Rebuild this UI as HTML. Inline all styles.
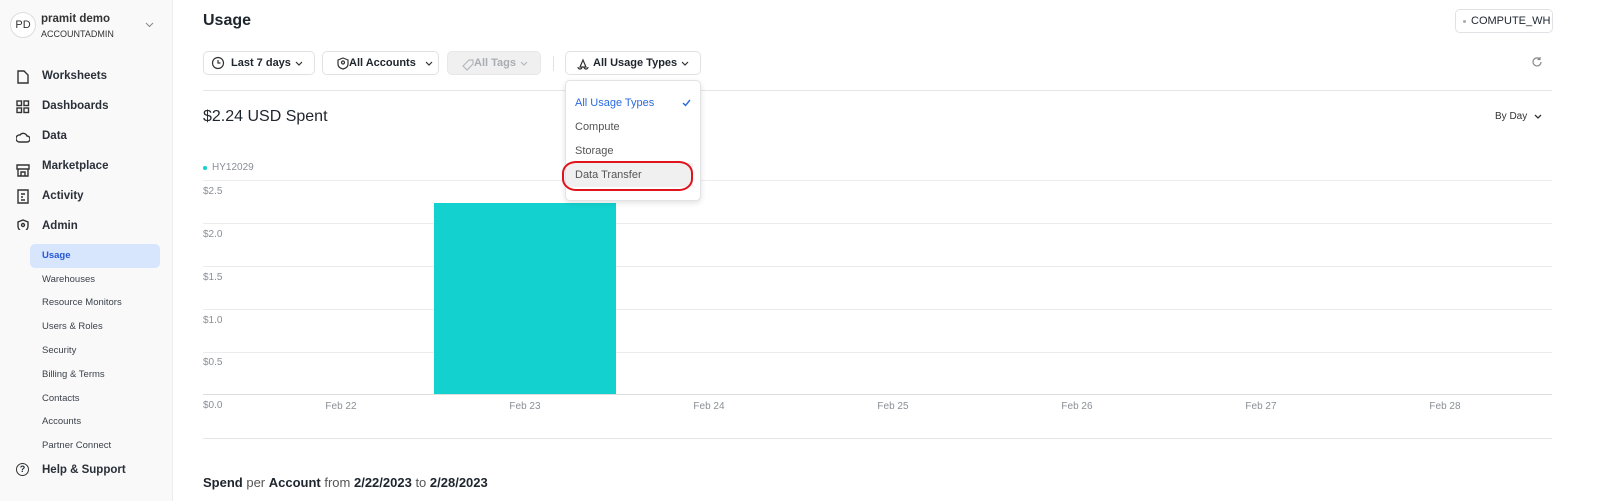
<!DOCTYPE html>
<html><head><style>
*{box-sizing:border-box;margin:0;padding:0}
body{width:1600px;height:501px;overflow:hidden;font-family:"Liberation Sans",sans-serif;background:#fff;position:relative;color:#1e252d}
.sb{position:absolute;left:0;top:0;width:173px;height:501px;background:#f9f9fa;border-right:1px solid #ececee}
.abs{position:absolute;white-space:nowrap}
.nav{font-size:11.5px;font-weight:bold;color:#2a3038}
.sub{font-size:9.5px;color:#3b424b;left:42px}
.btn{position:absolute;top:51px;height:24px;border:1px solid #dfe1e4;border-radius:5px;font-size:11px;font-weight:bold;color:#1e252d;padding:5px 0 0 0;background:#fff}
.yl{position:absolute;left:203px;font-size:10px;color:#8a8f96}
.gl{position:absolute;left:203px;width:1349px;height:1px;background:#ececee}
.xl{position:absolute;top:401px;font-size:10px;color:#8a8f96;width:60px;text-align:center}
</style></head><body>
<div class="sb">
<div class="abs" style="left:10px;top:12px;width:26px;height:26px;border:1px solid #dcdde0;border-radius:50%;background:#fff;font-size:11px;text-align:center;line-height:24px;color:#333">PD</div>
<div class="abs" style="left:41px;top:13px;font-size:11.5px;font-weight:bold;color:#333">pramit demo</div>
<div class="abs" style="left:41px;top:29px;font-size:9px;color:#333">ACCOUNTADMIN</div>
<svg class="abs" style="left:145px;top:22px" width="9" height="6"><path d="M1 1l3.5 3.5L8 1" stroke="#888" fill="none"/></svg>
<svg class="abs" style="left:16px;top:70px" width="14" height="160" fill="none" stroke="#333" stroke-width="1.4">
<path d="M2 1h6l4 4v8H2z"/>
<rect x="1" y="31" width="4.5" height="4.5"/><rect x="8" y="31" width="4.5" height="4.5"/><rect x="1" y="38" width="4.5" height="4.5"/><rect x="8" y="38" width="4.5" height="4.5"/>
<path d="M3 72h8a3 3 0 0 0 0-6 4 4 0 0 0-7-1 3 3 0 0 0-1 7z"/>
<path d="M1 95h12v4H1zM2 99v7h10v-7M5 106v-4h4v4"/>
<path d="M2 120h10v13H2zM5 124h4M5 127h2M5 130h4"/>
<path d="M7 150l5 2v4c0 3-2 5-5 6-3-1-5-3-5-6v-4z"/><circle cx="7" cy="155" r="1.5"/>
</svg>
<div class="abs nav" style="left:42px;top:70px">Worksheets</div>
<div class="abs nav" style="left:42px;top:100px">Dashboards</div>
<div class="abs nav" style="left:42px;top:130px">Data</div>
<div class="abs nav" style="left:42px;top:160px">Marketplace</div>
<div class="abs nav" style="left:42px;top:190px">Activity</div>
<div class="abs nav" style="left:42px;top:220px">Admin</div>
<div class="abs" style="left:30px;top:244px;width:130px;height:24px;background:#d7e5fd;border-radius:5px"></div>
<div class="abs sub" style="top:250px;color:#2458d6;font-weight:bold">Usage</div>
<div class="abs sub" style="top:274px">Warehouses</div>
<div class="abs sub" style="top:297px">Resource Monitors</div>
<div class="abs sub" style="top:321px">Users &amp; Roles</div>
<div class="abs sub" style="top:345px">Security</div>
<div class="abs sub" style="top:369px">Billing &amp; Terms</div>
<div class="abs sub" style="top:393px">Contacts</div>
<div class="abs sub" style="top:416px">Accounts</div>
<div class="abs sub" style="top:440px">Partner Connect</div>
<div class="abs" style="left:16px;top:463px;width:13px;height:13px;border:1.4px solid #333;border-radius:50%;font-size:9px;text-align:center;line-height:11px;font-weight:bold">?</div>
<div class="abs nav" style="left:42px;top:464px">Help &amp; Support</div>
</div>

<div class="abs" style="left:203px;top:12px;font-size:16px;font-weight:bold">Usage</div>
<div class="abs" style="left:1455px;top:9px;width:98px;height:24px;border:1px solid #dfe1e4;border-radius:5px;font-size:11px;padding:5px 0 0 15px;color:#1e252d">COMPUTE_WH</div>
<div class="abs" style="left:1463px;top:20px;width:3px;height:3px;border-radius:50%;background:#aaa"></div>

<div class="btn" style="left:203px;width:112px;padding-left:27px">Last 7 days</div>
<div class="btn" style="left:322px;width:117px;padding-left:26px">All Accounts</div>
<div class="btn" style="left:447px;width:94px;padding-left:26px;background:#f0f0f1;color:#a9adb2;border-color:#e6e7e9">All Tags</div>
<div class="abs" style="left:553px;top:56px;width:1px;height:15px;background:#dfe1e4"></div>
<div class="btn" style="left:565px;width:136px;padding-left:27px">All Usage Types</div>
<svg class="abs" style="left:210px;top:55px" width="500" height="16" fill="none" stroke="#333" stroke-width="1.2">
<circle cx="8" cy="8" r="5.5"/><path d="M8 5v3h2.5"/><path d="M86 7l3 3 3-3"/>
<path d="M133 3l5 2v4c0 3-2 4-5 5-3-1-5-2-5-5V5z"/><circle cx="133" cy="7.5" r="1.5"/><path d="M216 7l3 3 3-3"/>
<path d="M253 11l6-6h4v4l-6 6z" stroke="#b5b8bd"/><path d="M311 7l3 3 3-3" stroke="#b5b8bd"/>
<path d="M370 12l3-7 3 7zM368 12a2 2 0 1 0 4 0M374 12a2 2 0 1 0 4 0"/><path d="M472 7l3 3 3-3"/>
</svg>
<svg class="abs" style="left:1531px;top:56px" width="12" height="12" fill="none" stroke="#888" stroke-width="1.2"><path d="M10 6a4 4 0 1 1-1.5-3.2M9 1v2.5H6.5"/></svg>
<div class="abs" style="left:203px;top:90px;width:1349px;height:1px;background:#e4e5e7"></div>

<div class="abs" style="left:203px;top:108px;font-size:16px;">$2.24 USD Spent</div>
<div class="abs" style="left:1495px;top:111px;font-size:10px;color:#333">By Day</div>
<svg class="abs" style="left:1534px;top:114px" width="8" height="6"><path d="M1 1l3 3 3-3" stroke="#333" fill="none" stroke-width="1.3"/></svg>

<div class="abs" style="left:203px;top:166px;width:4px;height:4px;border-radius:50%;background:#13d1cf"></div>
<div class="abs" style="left:212px;top:162px;font-size:10px;color:#8a8f96">HY12029</div>
<div class="gl" style="top:180px"></div><div class="gl" style="top:223px"></div><div class="gl" style="top:266px"></div><div class="gl" style="top:309px"></div><div class="gl" style="top:352px"></div><div class="gl" style="top:394px;background:#dcdde0"></div>
<div class="yl" style="top:186px">$2.5</div><div class="yl" style="top:229px">$2.0</div><div class="yl" style="top:272px">$1.5</div><div class="yl" style="top:315px">$1.0</div><div class="yl" style="top:357px">$0.5</div><div class="yl" style="top:400px">$0.0</div>
<div class="abs" style="left:434px;top:203px;width:182px;height:191px;background:#13d1cf"></div>
<div class="xl" style="left:311px">Feb 22</div><div class="xl" style="left:495px">Feb 23</div><div class="xl" style="left:679px">Feb 24</div><div class="xl" style="left:863px">Feb 25</div><div class="xl" style="left:1047px">Feb 26</div><div class="xl" style="left:1231px">Feb 27</div><div class="xl" style="left:1415px">Feb 28</div>
<div class="abs" style="left:203px;top:438px;width:1349px;height:1px;background:#e4e5e7"></div>
<div class="abs" style="left:203px;top:475px;font-size:13px;color:#555"><b style="color:#1e252d">Spend</b> per <b style="color:#1e252d">Account</b> from <b style="color:#1e252d">2/22/2023</b> to <b style="color:#1e252d">2/28/2023</b></div>

<div class="abs" style="left:565px;top:80px;width:136px;height:121px;background:#fff;border:1px solid #e2e3e5;border-radius:5px;box-shadow:0 2px 6px rgba(0,0,0,.12)"></div>
<div class="abs" style="left:575px;top:97px;font-size:11px;color:#2a6ae0">All Usage Types</div>
<svg class="abs" style="left:682px;top:99px" width="9" height="8"><path d="M1 4l2.5 2.5L8 1" stroke="#2a6ae0" fill="none" stroke-width="1.4"/></svg>
<div class="abs" style="left:575px;top:121px;font-size:11px;color:#555">Compute</div>
<div class="abs" style="left:575px;top:145px;font-size:11px;color:#555">Storage</div>
<div class="abs" style="left:566px;top:163px;width:127px;height:24px;background:#f0f0f1"></div>
<div class="abs" style="left:575px;top:169px;font-size:11px;color:#555">Data Transfer</div>
<div class="abs" style="left:562px;top:161px;width:131px;height:30px;border:2.5px solid #e0141c;border-radius:14px/12px"></div>
</body></html>
